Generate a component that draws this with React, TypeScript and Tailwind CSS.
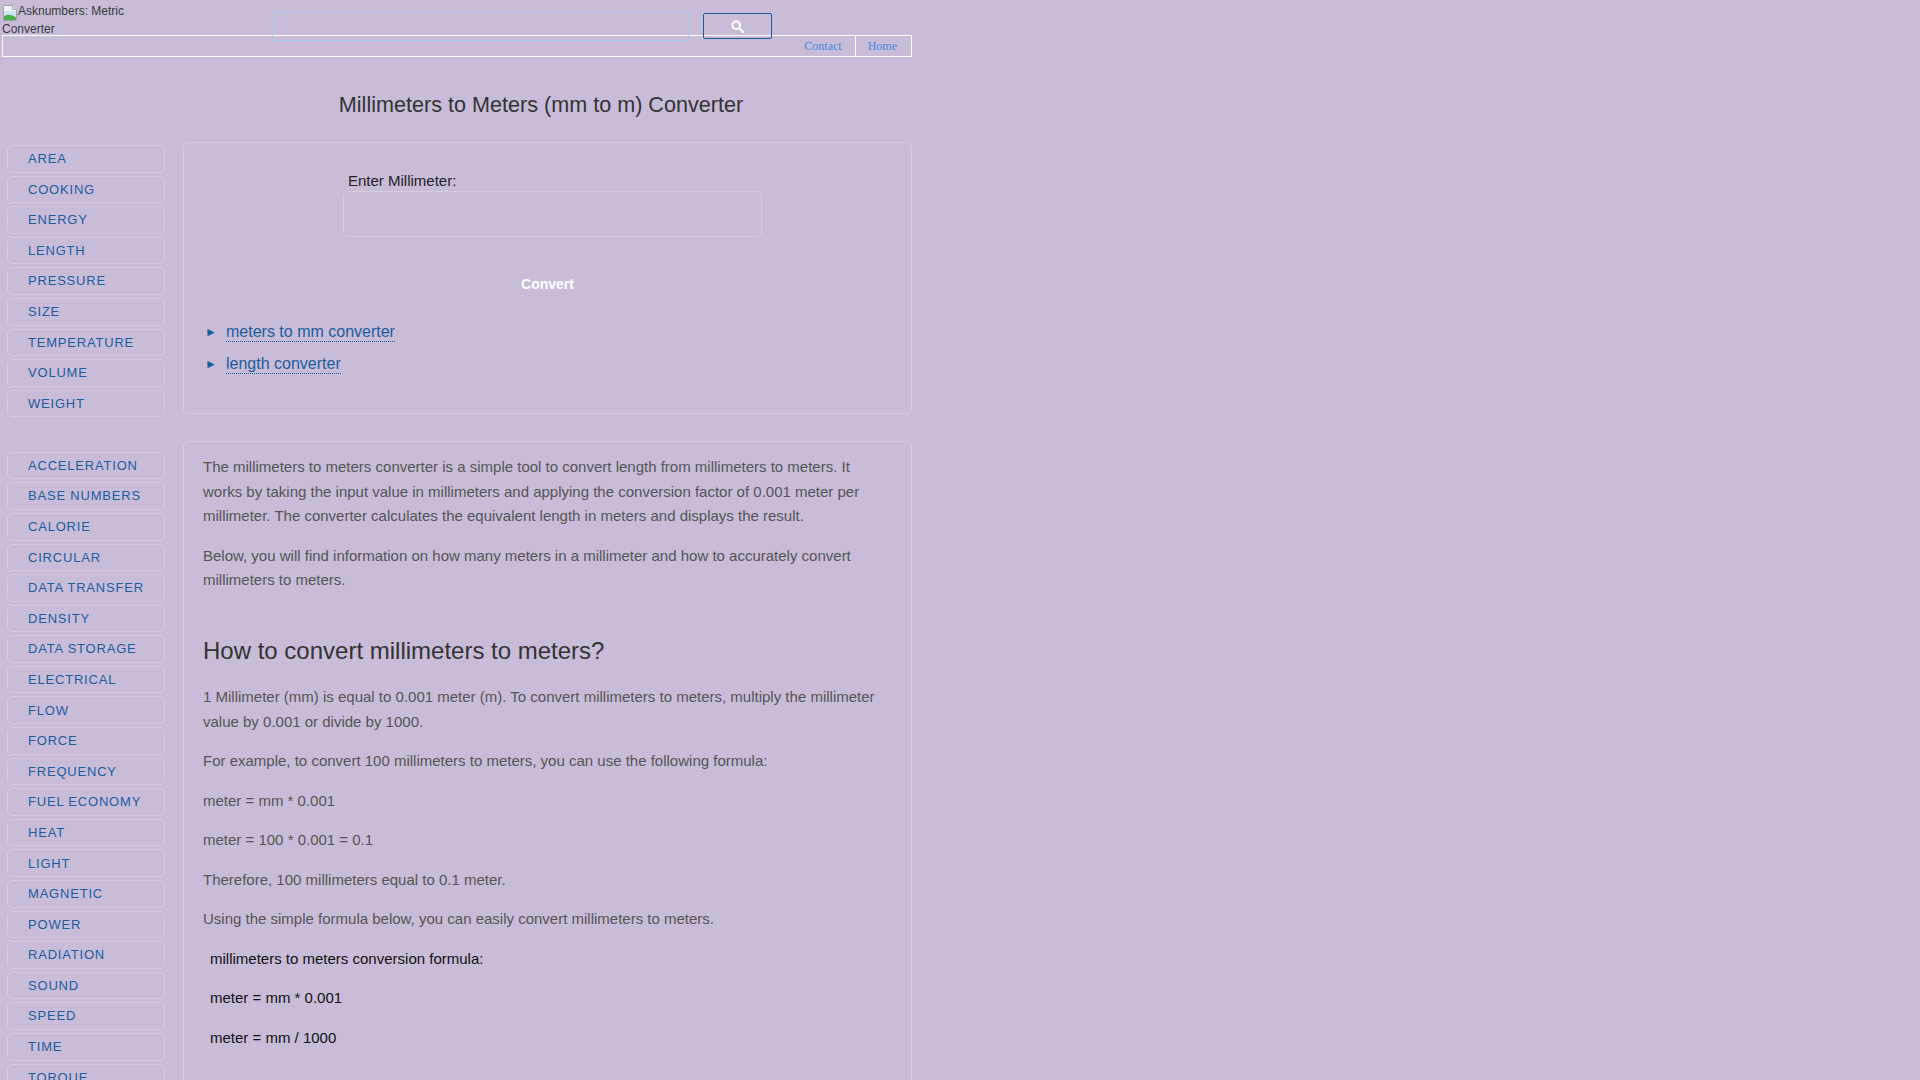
import React from 'react';

const groupOne = ['AREA', 'COOKING', 'ENERGY', 'LENGTH', 'PRESSURE', 'SIZE', 'TEMPERATURE', 'VOLUME', 'WEIGHT'];
const groupTwo = [
  'ACCELERATION', 'BASE NUMBERS', 'CALORIE', 'CIRCULAR', 'DATA TRANSFER', 'DENSITY', 'DATA STORAGE',
  'ELECTRICAL', 'FLOW', 'FORCE', 'FREQUENCY', 'FUEL ECONOMY', 'HEAT', 'LIGHT', 'MAGNETIC', 'POWER',
  'RADIATION', 'SOUND', 'SPEED', 'TIME', 'TORQUE',
];

function BrokenImage() {
  return (
    <svg width="16" height="16" viewBox="0 0 16 16" className="inline-block align-top mt-[3px] ml-[2px]">
      <path d="M1.5 0.5h9l4 4v11h-13z" fill="#f2f4f7" stroke="#9aa3ad" />
      <path d="M10.5 0.5v4h4" fill="#dde2e8" stroke="#9aa3ad" />
      <rect x="2" y="6" width="12" height="5" fill="#cfe3f7" />
      <path d="M2 15V11.5C5 9 8 9.5 14 12v3z" fill="#4caf50" />
    </svg>
  );
}

function SideItem({ name }: { name: string }) {
  return (
    <a
      href="#"
      className="flex items-center h-[27.6px] mb-[3px] pl-[20px] border border-[#d4cddd] rounded-[5px] text-[13px] tracking-[0.8px] text-[#1b5d9d] whitespace-nowrap"
    >
      {name}
    </a>
  );
}

function RelatedLink({ label }: { label: string }) {
  return (
    <li className="flex items-center">
      <span className="w-[21px] text-[12px] text-[#1b5d9d]">►</span>
      <a href="#" className="text-[#1b5d9d] leading-[18px] border-b border-dotted border-[#1b5d9d]">
        {label}
      </a>
    </li>
  );
}

export default function App() {
  return (
    <div className="min-h-screen bg-[#c9bcd9] font-['Liberation_Sans',Arial,sans-serif] text-[#333]">
      <div className="relative w-[912px]">
        {/* broken logo image */}
        <div className="h-[35px] w-[125px] pt-[2px] text-[12px] leading-[18px] text-[#3a3a3a]">
          <BrokenImage />
          <span className="align-top">Asknumbers: Metric</span>
          <div className="pl-[2px] -mt-[1px]">Converter</div>
        </div>

        <div className="ml-[2px] h-[22px] border border-white flex justify-end font-['Liberation_Serif',serif] text-[12px] text-[#3d89df]">
          <a href="#" className="flex items-center pl-[12px] pr-[13px]">Contact</a>
          <a href="#" className="flex items-center pl-[12px] pr-[14px] border-l border-white">Home</a>
        </div>

        {/* search widget */}
        <div className="absolute left-[272px] top-[12px] w-[417px] h-[29px] border border-[#a9c8ec]" />
        <button className="absolute left-[703px] top-[13px] w-[69px] h-[26px] border border-[#1d5a99] rounded-[2px] flex items-center justify-center">
          <svg width="13" height="13" viewBox="0 0 13 13">
            <circle cx="5.2" cy="5.2" r="3.8" fill="none" stroke="#fff" strokeWidth="2" />
            <path d="M8 8l4 4" stroke="#fff" strokeWidth="2.2" strokeLinecap="round" />
          </svg>
        </button>

        <h1 className="mt-[35px] pl-[170px] text-center text-[21.6px] leading-[26px] text-[#333] font-normal">
          Millimeters to Meters (mm to m) Converter
        </h1>

        <div className="flex mt-[24px] gap-[18px]">
          <nav className="w-[158px] ml-[7px] mt-[3px] shrink-0">
            {groupOne.map((n) => (
              <SideItem key={n} name={n} />
            ))}
            <div className="pt-[31.4px]">
              {groupTwo.map((n) => (
                <SideItem key={n} name={n} />
              ))}
            </div>
          </nav>

          <main className="w-[729px] shrink-0">
            <section className="h-[272px] border border-[#d4cddd] rounded-[5px]">
              <div className="ml-[159px] w-[419px] pt-[29px]">
                <label className="block pl-[5px] text-[15px] leading-[18px] text-[#222]">Enter Millimeter:</label>
                <input
                  type="text"
                  className="block mt-[1px] w-[419px] h-[46px] border border-[#d4cddd] rounded-[5px] bg-transparent outline-none"
                />
              </div>
              <div className="mt-[29px] flex justify-center">
                <button className="h-[36px] px-[16px] text-[14px] font-bold text-white bg-transparent">Convert</button>
              </div>
              <ul className="mt-[14px] pl-[21px] text-[16px] leading-[32px]">
                <RelatedLink label="meters to mm converter" />
                <RelatedLink label="length converter" />
              </ul>
            </section>

            <section className="mt-[27px] border border-[#d4cddd] rounded-[5px] px-[19px] pt-[13px] pb-[40px] text-[15px] leading-[24.5px] text-[#555]">
              <p className="mb-[15px]">
                The millimeters to meters converter is a simple tool to convert length from millimeters to meters. It works by taking the input value in millimeters and applying the conversion factor of 0.001 meter per millimeter. The converter calculates the equivalent length in meters and displays the result.
              </p>
              <p>
                Below, you will find information on how many meters in a millimeter and how to accurately convert millimeters to meters.
              </p>
              <h2 className="mt-[44.5px] mb-[20px] text-[24px] leading-[28px] text-[#333] font-normal">
                How to convert millimeters to meters?
              </h2>
              <p className="mb-[15px]">
                1 Millimeter (mm) is equal to 0.001 meter (m). To convert millimeters to meters, multiply the millimeter value by 0.001 or divide by 1000.
              </p>
              <p className="mb-[15px]">For example, to convert 100 millimeters to meters, you can use the following formula:</p>
              <p className="mb-[15px]">meter = mm * 0.001</p>
              <p className="mb-[15px]">meter = 100 * 0.001 = 0.1</p>
              <p className="mb-[15px]">Therefore, 100 millimeters equal to 0.1 meter.</p>
              <p className="mb-[15px]">Using the simple formula below, you can easily convert millimeters to meters.</p>
              <div className="pl-[7px] text-[#111]">
                <p className="mb-[15px]">millimeters to meters conversion formula:</p>
                <p className="mb-[15px]">meter = mm * 0.001</p>
                <p className="mb-[15px]">meter = mm / 1000</p>
              </div>
            </section>
          </main>
        </div>
      </div>
    </div>
  );
}
